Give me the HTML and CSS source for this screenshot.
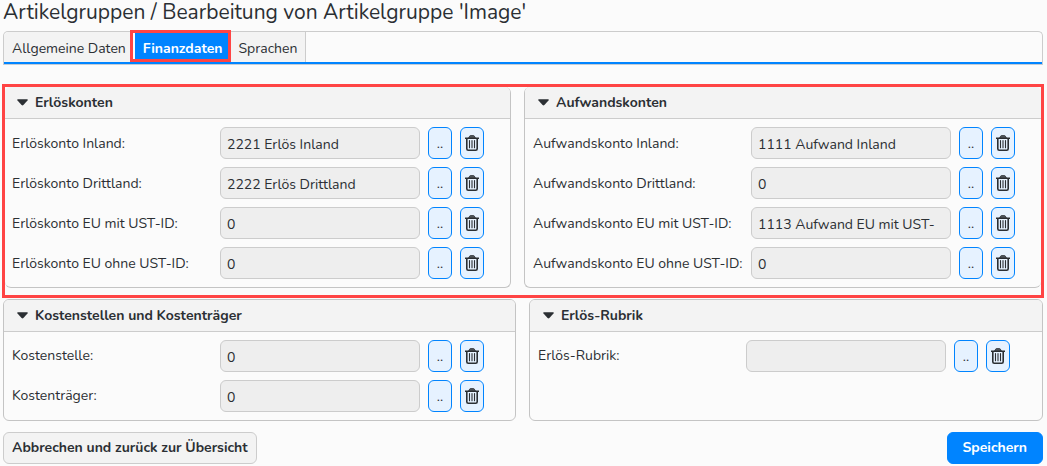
FILE: index.html
```html
<!DOCTYPE html>
<html lang="de">
<head>
    <meta charset="utf-8">
    <title>Artikelgruppen</title>
    <link rel="stylesheet" href="styles.css">
</head>
<body>
    <svg class="sprite" aria-hidden="true">
        <symbol id="trash" viewBox="0 0 14 16">
            <path d="M0.4 3.2h13.2" stroke="currentColor" stroke-width="1.6" stroke-linecap="round"/>
            <path d="M3.6 3L4.8 0.9Q5.1 0.4 5.7 0.4h2.6q0.6 0 0.9 0.5L10.4 3z" fill="#4c5358" stroke="currentColor" stroke-width="0.8"/>
            <path d="M1.8 3.5v10.2q0 1.5 1.5 1.5h7.4q1.5 0 1.5-1.5V3.5" fill="none" stroke="currentColor" stroke-width="1.6"/>
            <path d="M4.5 5.6v7.2M7 5.6v7.2M9.5 5.6v7.2" stroke="currentColor" stroke-width="1.1" stroke-linecap="round"/>
        </symbol>
        <symbol id="caret" viewBox="0 0 11 7">
            <path d="M0.9 0.2h9.2q1.2 0.2 0.4 1.2L6.4 6q-0.9 0.9-1.8 0L0.5 1.4Q-0.3 0.4 0.9 0.2z" fill="currentColor"/>
        </symbol>
    </svg>

    <h1>Artikelgruppen / Bearbeitung von Artikelgruppe 'Image'</h1>

    <nav class="tabs">
        <a class="tab" href="#allgemein">Allgemeine Daten</a>
        <a class="tab active" href="#finanzdaten">Finanzdaten</a>
        <a class="tab" href="#sprachen">Sprachen</a>
    </nav>

    <form>
        <div class="panels marked">
            <section class="panel">
                <h2><svg class="caret"><use href="#caret"/></svg>Erlöskonten</h2>
                <div class="rows">
                    <div class="row">
                        <label for="erloesInland">Erlöskonto Inland:</label>
                        <input type="text" id="erloesInland" value="2221 Erlös Inland" readonly>
                        <button type="button" class="pick">..</button>
                        <button type="button" class="pick" aria-label="Löschen"><svg class="trash"><use href="#trash"/></svg></button>
                    </div>
                    <div class="row">
                        <label for="erloesDrittland">Erlöskonto Drittland:</label>
                        <input type="text" id="erloesDrittland" value="2222 Erlös Drittland" readonly>
                        <button type="button" class="pick">..</button>
                        <button type="button" class="pick" aria-label="Löschen"><svg class="trash"><use href="#trash"/></svg></button>
                    </div>
                    <div class="row">
                        <label for="erloesEuMit">Erlöskonto EU mit UST-ID:</label>
                        <input type="text" id="erloesEuMit" value="0" readonly>
                        <button type="button" class="pick">..</button>
                        <button type="button" class="pick" aria-label="Löschen"><svg class="trash"><use href="#trash"/></svg></button>
                    </div>
                    <div class="row">
                        <label for="erloesEuOhne">Erlöskonto EU ohne UST-ID:</label>
                        <input type="text" id="erloesEuOhne" value="0" readonly>
                        <button type="button" class="pick">..</button>
                        <button type="button" class="pick" aria-label="Löschen"><svg class="trash"><use href="#trash"/></svg></button>
                    </div>
                </div>
            </section>

            <section class="panel wide-labels">
                <h2><svg class="caret"><use href="#caret"/></svg>Aufwandskonten</h2>
                <div class="rows">
                    <div class="row">
                        <label for="aufwandInland">Aufwandskonto Inland:</label>
                        <input type="text" id="aufwandInland" value="1111 Aufwand Inland" readonly>
                        <button type="button" class="pick">..</button>
                        <button type="button" class="pick" aria-label="Löschen"><svg class="trash"><use href="#trash"/></svg></button>
                    </div>
                    <div class="row">
                        <label for="aufwandDrittland">Aufwandskonto Drittland:</label>
                        <input type="text" id="aufwandDrittland" value="0" readonly>
                        <button type="button" class="pick">..</button>
                        <button type="button" class="pick" aria-label="Löschen"><svg class="trash"><use href="#trash"/></svg></button>
                    </div>
                    <div class="row">
                        <label for="aufwandEuMit">Aufwandskonto EU mit UST-ID:</label>
                        <input type="text" id="aufwandEuMit" value="1113 Aufwand EU mit UST-" readonly>
                        <button type="button" class="pick">..</button>
                        <button type="button" class="pick" aria-label="Löschen"><svg class="trash"><use href="#trash"/></svg></button>
                    </div>
                    <div class="row">
                        <label for="aufwandEuOhne">Aufwandskonto EU ohne UST-ID:</label>
                        <input type="text" id="aufwandEuOhne" value="0" readonly>
                        <button type="button" class="pick">..</button>
                        <button type="button" class="pick" aria-label="Löschen"><svg class="trash"><use href="#trash"/></svg></button>
                    </div>
                </div>
            </section>
        </div>

        <div class="panels">
            <section class="panel">
                <h2><svg class="caret"><use href="#caret"/></svg>Kostenstellen und Kostenträger</h2>
                <div class="rows">
                    <div class="row">
                        <label for="kostenstelle">Kostenstelle:</label>
                        <input type="text" id="kostenstelle" value="0" readonly>
                        <button type="button" class="pick">..</button>
                        <button type="button" class="pick" aria-label="Löschen"><svg class="trash"><use href="#trash"/></svg></button>
                    </div>
                    <div class="row">
                        <label for="kostentraeger">Kostenträger:</label>
                        <input type="text" id="kostentraeger" value="0" readonly>
                        <button type="button" class="pick">..</button>
                        <button type="button" class="pick" aria-label="Löschen"><svg class="trash"><use href="#trash"/></svg></button>
                    </div>
                </div>
            </section>

            <section class="panel">
                <h2><svg class="caret"><use href="#caret"/></svg>Erlös-Rubrik</h2>
                <div class="rows">
                    <div class="row">
                        <label for="erloesRubrik">Erlös-Rubrik:</label>
                        <input type="text" id="erloesRubrik" value="" readonly>
                        <button type="button" class="pick">..</button>
                        <button type="button" class="pick" aria-label="Löschen"><svg class="trash"><use href="#trash"/></svg></button>
                    </div>
                </div>
            </section>
        </div>

        <div class="actions">
            <button type="button" class="btn">Abbrechen und zurück zur Übersicht</button>
            <button type="submit" class="btn primary">Speichern</button>
        </div>
    </form>
</body>
</html>
```
FILE: styles.css
```css
* {
    box-sizing: border-box;
}

body {
    margin: 0;
    padding: 0 4px 0 3px;
    background-color: #fbfbfb;
    color: #2b2f33;
    font-family: Nunito, Lato, "Open Sans", sans-serif;
    font-size: 14px;
}

input, button {
    font: inherit;
    color: inherit;
}

.sprite {
    display: none;
}

h1 {
    margin: 0 0 7px;
    font-size: 21px;
    line-height: 24px;
    font-weight: 400;
}

.tabs {
    display: flex;
    height: 34px;
    margin-bottom: 19px;
    border: 1px solid #ccc;
    border-bottom-color: #c4ccd4;
    border-radius: 5px 5px 0 0;
    box-shadow: inset 0 -2px #0084ff;
}

.tab {
    height: 30px;
    padding: 0 8px;
    border-right: 1px solid #ccc;
    background-color: #f3f3f3;
    color: inherit;
    line-height: 34px;
    text-align: center;
    text-decoration: none;
    white-space: nowrap;
}

.tab:first-child {
    padding-right: 4px;
    border-radius: 5px 0 0 0;
}

.tab.active {
    position: relative;
    border-left: 4px solid #fbfbfb;
    border-right: 0;
    background-color: #0084ff;
    color: #fff;
    font-weight: 700;
}

.tab.active::after {
    content: "";
    position: absolute;
    top: -2px;
    right: 0;
    bottom: 0;
    left: -5px;
    border: 3px solid #ff4444;
}

.panels {
    display: grid;
    grid-template-columns: 513fr 514fr;
    gap: 13px;
}

.panel {
    border: 1px solid #c4c4c4;
    border-radius: 6px;
}

.panel h2 {
    display: flex;
    align-items: center;
    gap: 7px;
    height: 32px;
    margin: 0;
    padding-left: 13px;
    border-bottom: 1px solid #ccc;
    border-radius: 5px 5px 0 0;
    background-color: #f3f3f3;
    font-size: 14px;
    font-weight: 700;
}

/* red frame around the account panels */
.marked {
    grid-template-columns: 506fr 517fr;
    margin: 0 -1px 1px;
    padding-bottom: 7px;
    border: 3px solid #ff4444;
}

.marked .panel {
    border-top: 0;
}

.marked .panel:first-child {
    border-left: 0;
}

.marked .panel:last-child {
    border-right: 0;
}

.marked .panel:first-child h2 {
    padding-left: 12px;
}

.marked .panel:first-child .rows {
    padding-left: 7px;
}

.caret {
    width: 11px;
    height: 7px;
}

.rows {
    display: flex;
    flex-direction: column;
    gap: 8px;
    padding: 8px;
}

.row {
    display: grid;
    grid-template-columns: 200px 200px 24px 24px;
    grid-template-rows: 32px;
    column-gap: 8px;
}

.wide-labels .row {
    grid-template-columns: 210px 200px 24px 24px;
}

.row label {
    line-height: 32px;
    white-space: nowrap;
}

.marked label {
    line-height: 34px;
}

.row input {
    width: 100%;
    padding: 2px 6px 0;
    border: 1px solid #ccc;
    border-radius: 6px;
    background-color: #eee;
}

.pick {
    display: flex;
    align-items: center;
    justify-content: center;
    padding: 0;
    border: 1px solid #0084ff;
    border-radius: 6px;
    background-color: #e6f2ff;
    cursor: pointer;
}

.trash {
    width: 14px;
    height: 16px;
}

.actions {
    display: flex;
    justify-content: space-between;
    padding: 11px 0 2px;
}

.btn {
    height: 32px;
    padding: 0 8px 2px;
    border: 1px solid #ccc;
    border-radius: 6px;
    background-color: #f3f3f3;
    font-weight: 700;
    cursor: pointer;
}

.primary {
    padding: 0 15px 2px;
    border-color: #0084ff;
    background-color: #0084ff;
    color: #fff;
}
```
